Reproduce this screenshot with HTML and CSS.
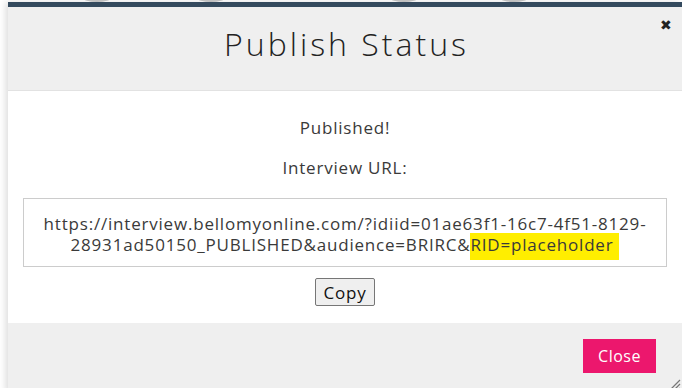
FILE: index.html
```html
<!DOCTYPE html>
<html lang="en">
<head>
  <meta charset="UTF-8">
  <title>Publish Status</title>
  <link rel="stylesheet" href="styles.css">
</head>
<body>
  <div class="backdrop">
    <span class="bump b1"></span>
    <span class="bump b2"></span>
    <span class="bump b3"></span>
    <span class="bump b4"></span>
  </div>
  <div class="dialog">
    <div class="dialog-header">
      <h2>Publish Status</h2>
      <span class="close-x">&#x2716;</span>
    </div>
    <div class="dialog-body">
      <p>Published!</p>
      <p>Interview URL:</p>
      <div class="url-box">https://interview.bellomyonline.com/?idiid=01ae63f1-16c7-4f51-8129-28931ad50150_PUBLISHED&amp;audience=BRIRC&amp;<span class="mark">RID=placeholder</span></div>
      <button class="copy-button">Copy</button>
    </div>
    <div class="dialog-footer">
      <button class="close-button">Close</button>
      <svg class="grip" width="14" height="14" viewBox="0 0 14 14">
        <path d="M13 3 L3 13 M13 7 L7 13 M13 11 L11 13" stroke="#777" stroke-width="1.2"/>
      </svg>
    </div>
  </div>
</body>
</html>
```

FILE: styles.css
```css
body {
  margin: 0;
  background: #fff;
  font-family: 'Open Sans', sans-serif;
  color: #3a3a3a;
  overflow: hidden;
}
.backdrop {
  position: absolute;
  top: 0;
  left: 0;
  right: 0;
  height: 2px;
}
.bump {
  position: absolute;
  top: -6px;
  width: 28px;
  height: 8px;
  border-radius: 50%;
  background: #c8c8c8;
}
.b1 { left: 83px; }
.b2 { left: 197px; }
.b3 { left: 390px; }
.b4 { left: 500px; }
.dialog {
  margin: 2px 0 0 8px;
  height: 386px;
  border-top: 5px solid #344a5e;
  box-shadow: -3px 0 6px rgba(0,0,0,0.12);
  display: flex;
  flex-direction: column;
  position: relative;
}
.dialog-header {
  height: 83px;
  background: #efefef;
  border-bottom: 1px solid #e2e2e2;
  position: relative;
}
.dialog-header h2 {
  margin: 0;
  padding: 15px 0 0 3px;
  text-align: center;
  font-size: 32px;
  font-weight: 300;
  letter-spacing: 3px;
  color: #222;
}
.close-x {
  position: absolute;
  top: 8px;
  right: 10px;
  font-size: 14px;
  color: #222;
}
.dialog-body {
  height: 232px;
  padding: 25px 15px 0;
  box-sizing: border-box;
  text-align: center;
  background: #fff;
  letter-spacing: 0.8px;
}
.dialog-body p {
  margin: 0 0 16px;
  font-size: 17px;
  line-height: 24px;
}
.url-box {
  margin-top: 18px;
  border: 1px solid #ccc;
  padding: 14px 8px 11px;
  font-size: 17px;
  line-height: 21px;
}
.mark {
  background: #ffee00;
  padding: 0 6px 4px 0;
}
.copy-button {
  margin-top: 11px;
  font-family: 'Open Sans', sans-serif;
  font-size: 17px;
  letter-spacing: 0.8px;
  padding: 0 7px;
  height: 28px;
  background: #efefef;
  border: 1px solid #767676;
  border-radius: 2px;
  color: #111;
}
.dialog-footer {
  flex: 1;
  background: #efefef;
  display: flex;
  justify-content: flex-end;
  align-items: flex-start;
  padding: 16px 26px 0 0;
  position: relative;
}
.close-button {
  width: 73px;
  height: 34px;
  background: #ec176d;
  color: #fff;
  border: none;
  font-family: 'Open Sans', sans-serif;
  font-size: 16px;
  letter-spacing: 0.5px;
}
.grip {
  position: absolute;
  right: 1px;
  bottom: 2px;
}
```
